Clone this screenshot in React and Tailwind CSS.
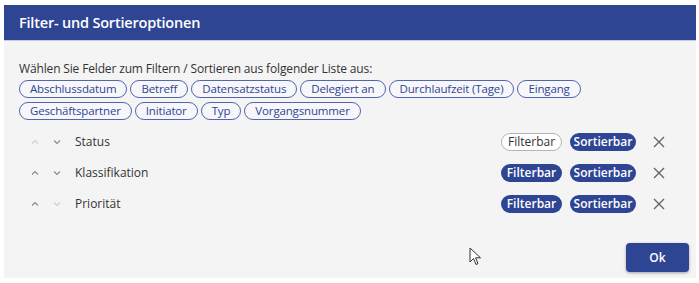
import React from 'react';

const fields = [
  ['Abschlussdatum', 'Betreff', 'Datensatzstatus', 'Delegiert an', 'Durchlaufzeit (Tage)', 'Eingang'],
  ['Geschäftspartner', 'Initiator', 'Typ', 'Vorgangsnummer'],
];

const rows = [
  { label: 'Status', up: false, down: true, filter: false },
  { label: 'Klassifikation', up: true, down: true, filter: true },
  { label: 'Priorität', up: true, down: false, filter: true },
];

const Chevron = ({ dir, active }) => (
  <svg width="8" height="6" viewBox="0 0 8 6" className={active ? 'text-[#8a8a8a]' : 'text-[#cfcfcf]'}>
    <path d={dir === 'up' ? 'M1 4.5 L4 1.5 L7 4.5' : 'M1 1.5 L4 4.5 L7 1.5'} fill="none" stroke="currentColor" strokeWidth="1.1" />
  </svg>
);

const App = () => {
  return (
    <div className="relative w-[699px] h-[283px] bg-white pt-[5px] pl-[4px]" style={{ fontFamily: '"Open Sans", "Noto Sans", sans-serif' }}>
      <div className="w-[692px] h-[273px] bg-[#f4f4f4] flex flex-col">
        <div className="h-[36px] bg-[#2e4593] flex items-center px-[15px] border-b border-[#c5cce3]">
          <span className="text-white text-[14.5px] font-semibold tracking-[-0.2px]">Filter- und Sortieroptionen</span>
        </div>
        <div className="flex-1 flex flex-col pl-[15px] pr-[7px] pt-[21px]">
          <p className="text-[12px] leading-[14px] text-[#333] tracking-[-0.15px]">Wählen Sie Felder zum Filtern / Sortieren aus folgender Liste aus:</p>
          <div className="flex flex-col gap-[4px] mt-[4px]">
            {fields.map((line, i) => (
              <div key={i} className="flex gap-[3px]">
                {line.map((f) => (
                  <span key={f} className="h-[18px] px-[10px] rounded-full border border-[#5166ad] text-[11.5px] leading-[16px] tracking-[-0.15px] text-[#2e4593] bg-[#f7f7fb]">
                    {f}
                  </span>
                ))}
              </div>
            ))}
          </div>
          <div className="flex flex-col mt-[6px]">
            {rows.map((r) => (
              <div key={r.label} className="h-[31px] flex items-center">
                <div className="flex items-center gap-[14px] pl-[12px] w-[56px]">
                  <Chevron dir="up" active={r.up} />
                  <Chevron dir="down" active={r.down} />
                </div>
                <span className="text-[12px] text-[#333] flex-1">{r.label}</span>
                <div className="flex items-center gap-[8px]">
                  <span
                    className={
                      r.filter
                        ? 'h-[18px] w-[61px] rounded-full bg-[#2e4593] text-white text-[12px] font-semibold leading-[18px] text-center'
                        : 'h-[18px] w-[61px] rounded-full border border-[#b5b5b5] bg-white text-[#333] text-[12px] leading-[16px] text-center'
                    }
                  >
                    Filterbar
                  </span>
                  <span className="h-[18px] w-[66px] rounded-full bg-[#2e4593] text-white text-[12px] font-semibold leading-[18px] text-center">
                    Sortierbar
                  </span>
                </div>
                <svg width="12" height="12" viewBox="0 0 12 12" className="ml-[17px] mr-[24px] text-[#666]">
                  <path d="M1 1 L11 11 M11 1 L1 11" stroke="currentColor" strokeWidth="1.4" />
                </svg>
              </div>
            ))}
          </div>
          <div className="flex justify-end mt-auto mb-[6px]">
            <button className="w-[63px] h-[29px] rounded-[4px] bg-[#2e4593] text-white text-[12px] font-semibold shadow-[0_1px_3px_rgba(0,0,0,0.35)]">
              Ok
            </button>
          </div>
        </div>
      </div>
      <svg className="absolute left-[469px] top-[247px]" width="13" height="20" viewBox="0 0 13 20">
        <path d="M1 1 L1 15 L4.5 11.5 L7 17.5 L9 16.6 L6.6 10.8 L11.5 10.8 Z" fill="white" stroke="#333" strokeWidth="1" strokeLinejoin="round" />
      </svg>
    </div>
  );
};

export default App;
